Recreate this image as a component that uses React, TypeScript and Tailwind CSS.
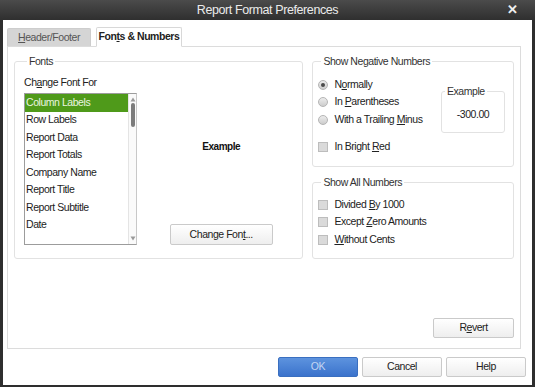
import React from 'react';

const listItems = [
  'Column Labels',
  'Row Labels',
  'Report Data',
  'Report Totals',
  'Company Name',
  'Report Title',
  'Report Subtitle',
  'Date',
];

const Radio = ({ checked, children }: { checked?: boolean; children: React.ReactNode }) => (
  <div className="flex items-center h-[17.5px] gap-[6px]">
    <span className="w-[10px] h-[10px] rounded-full border border-[#b4b4b4] bg-gradient-to-b from-[#ececec] to-[#cdcdcd] flex items-center justify-center">
      {checked && <span className="w-[4px] h-[4px] rounded-full bg-[#4a4a4a]" />}
    </span>
    <span>{children}</span>
  </div>
);

const Check = ({ children }: { children: React.ReactNode }) => (
  <div className="flex items-center h-[17.5px] gap-[6px]">
    <span className="w-[10px] h-[10px] border border-[#bdbdbd] bg-[#dadada]" />
    <span>{children}</span>
  </div>
);

const Btn = ({ children, className = '' }: { children: React.ReactNode; className?: string }) => (
  <button
    className={
      'h-[20px] border border-[#cacaca] rounded-[2px] bg-gradient-to-b from-white to-[#eeeeee] text-[#222] flex items-center justify-center ' +
      className
    }
  >
    {children}
  </button>
);

const legendCls = 'ml-[3px] px-[2px] leading-[13px] text-[#333]';

export default function App() {
  return (
    <div className="w-[535px] h-[387px] bg-[#2e2e2e] flex flex-col font-['Liberation_Sans',Arial,sans-serif] text-[10.5px] tracking-[-0.45px] text-[#222]">
      {/* title bar */}
      <div className="relative h-[20px] shrink-0 bg-gradient-to-b from-[#4b4b4b] to-[#2f2f2f] flex items-center justify-center">
        <span className="text-[12.5px] tracking-[-0.4px] text-[#ebebeb]">Report Format Preferences</span>
        <span className="absolute right-[17px] top-[3px] text-[13px] font-bold text-[#f0f0f0] leading-[13px]">✕</span>
      </div>

      <div className="h-[365px] bg-white mx-[3px] pl-[4px] pt-[7px] flex flex-col">
        {/* tabs */}
        <div className="flex items-end h-[19px] gap-[5px]">
          <div className="w-[84px] h-[18px] bg-[#d5d5d5] border border-[#cdcdcd] border-b-0 rounded-t-[2px] flex items-center justify-center text-[#555]">
            <span><u className="underline-offset-1">H</u>eader/Footer</span>
          </div>
          <div className="relative z-10 -mb-px w-[86px] h-[20px] bg-white border border-[#d8d8d8] border-b-white rounded-t-[2px] flex items-center justify-center font-bold text-[#222]">
            <span>Fon<u className="underline-offset-1">t</u>s &amp; Numbers</span>
          </div>
        </div>

        {/* panel */}
        <div className="w-[514px] h-[303px] border border-[#dcdcdc] px-[6px] pt-[8px] flex flex-col">
          <div className="flex gap-[9px]">
            {/* Fonts */}
            <fieldset className="w-[290px] h-[204px] border border-[#e2e2e2] rounded-[3px] pl-[9px] pr-[2px]">
              <legend className={legendCls}>Fonts</legend>
              <div className="flex">
                <div className="flex flex-col">
                  <div className="leading-[13px] mt-[8px]">
                    Ch<u className="underline-offset-1">a</u>nge Font For
                  </div>
                  <div className="mt-[4px] w-[113px] h-[152px] border border-[#9c9c9c] border-r-[#c8c8c8] flex">
                    <div className="flex-1 flex flex-col">
                      {listItems.map((it, i) => (
                        <div
                          key={it}
                          className={
                            'h-[17.5px] pl-[1px] flex items-center ' +
                            (i === 0 ? 'bg-[#4f9a1a] text-[#eaf5e0]' : 'text-[#1c1c1c]')
                          }
                        >
                          {it}
                        </div>
                      ))}
                    </div>
                    <div className="w-[8px] border-l border-[#e4e4e4] bg-[#fafafa] flex flex-col items-center">
                      <svg width="6" height="5" viewBox="0 0 6 5" className="mt-[3px]">
                        <path d="M3 0.5 L5.5 4.5 L0.5 4.5 Z" fill="#9a9a9a" />
                      </svg>
                      <div className="mt-[1px] w-[4px] h-[24px] rounded-[2px] bg-[#7c7c7c]" />
                      <div className="flex-1" />
                      <svg width="6" height="5" viewBox="0 0 6 5" className="mb-[3px]">
                        <path d="M0.5 0.5 L5.5 0.5 L3 4.5 Z" fill="#9a9a9a" />
                      </svg>
                    </div>
                  </div>
                </div>
                <div className="flex-1 flex flex-col items-center pt-[25px] pl-[5px]">
                  <div className="mt-[47px] leading-[13px] font-bold text-[10px] text-[#111]">Example</div>
                  <Btn className="mt-auto w-[103px] h-[21px]">
                    <span>Change Fon<u className="underline-offset-1">t</u>...</span>
                  </Btn>
                </div>
              </div>
            </fieldset>

            {/* right column */}
            <div className="flex flex-col gap-[9px] w-[202px]">
              <fieldset className="h-[112px] border border-[#e2e2e2] rounded-[3px] pl-[5px] pr-[8px]">
                <legend className={legendCls}>Show Negative Numbers</legend>
                <div className="flex">
                  <div className="flex flex-col pt-[8px]">
                    <Radio checked>
                      N<u className="underline-offset-1">o</u>rmally
                    </Radio>
                    <Radio>
                      In <u className="underline-offset-1">P</u>arentheses
                    </Radio>
                    <Radio>
                      With a Trailing <u className="underline-offset-1">M</u>inus
                    </Radio>
                  </div>
                  <fieldset className="ml-auto mt-[17px] w-[64px] h-[48px] border border-[#e2e2e2] rounded-[3px] flex flex-col">
                    <legend className="ml-[3px] px-[2px] leading-[13px] text-[#333]">Example</legend>
                    <div className="text-center mt-[10px] leading-[13px] text-[#222]">-300.00</div>
                  </fieldset>
                </div>
                <div className="mt-[5px]">
                  <Check>
                    In Bright <u className="underline-offset-1">R</u>ed
                  </Check>
                </div>
              </fieldset>

              <fieldset className="h-[83px] border border-[#e2e2e2] rounded-[3px] pl-[5px] pr-[8px]">
                <legend className={legendCls}>Show All Numbers</legend>
                <div className="flex flex-col pt-[7px]">
                  <Check>
                    Divided <u className="underline-offset-1">B</u>y 1000
                  </Check>
                  <Check>
                    Except <u className="underline-offset-1">Z</u>ero Amounts
                  </Check>
                  <Check>
                    <span>
                      <u className="underline-offset-1">W</u>ithout Cents
                    </span>
                  </Check>
                </div>
              </fieldset>
            </div>
          </div>

          <div className="flex-1" />
          <div className="flex justify-end mb-[10px]">
            <Btn className="w-[81px]">
              <span>R<u className="underline-offset-1">e</u>vert</span>
            </Btn>
          </div>
        </div>

        {/* footer buttons */}
        <div className="mt-[8px] flex justify-end gap-[4px] pr-[6px]">
          <button className="w-[80px] h-[20px] rounded-[2px] border border-[#3a6fc0] bg-gradient-to-b from-[#5d93de] to-[#3b73cc] text-[#c3d6f2] flex items-center justify-center">
            OK
          </button>
          <Btn className="w-[80px]">Cancel</Btn>
          <Btn className="w-[80px]">Help</Btn>
        </div>
      </div>
    </div>
  );
}
